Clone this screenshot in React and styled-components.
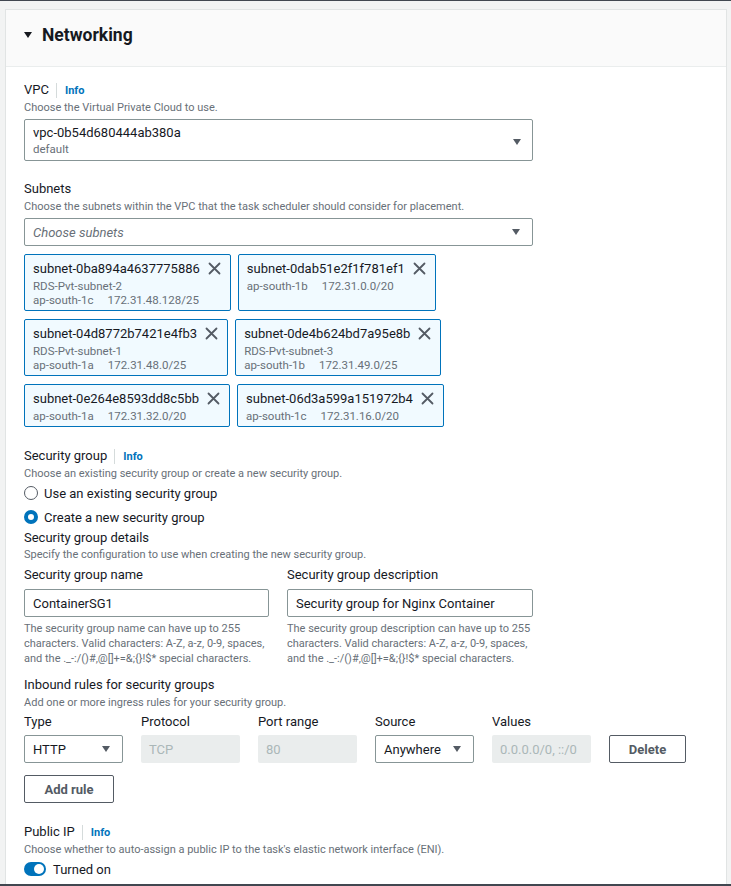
import React from "react";
import styled, { createGlobalStyle } from "styled-components";

const GlobalStyle = createGlobalStyle`
  html, body {
    margin: 0;
    padding: 0;
    background: #f2f3f3;
    font-family: Roboto, "Liberation Sans", Arial, sans-serif;
    color: #16191f;
  }
  * { box-sizing: border-box; }
`;

const TopEdge = styled.div`
  height: 1px;
  background: #414750;
`;

const BottomEdge = styled.div`
  position: fixed;
  left: 0;
  right: 0;
  bottom: 0;
  height: 2px;
  background: #414750;
`;

const Page = styled.div`
  padding: 8px 4px 0 5px;
`;

const Panel = styled.section`
  background: #fff;
  border: 1px solid #e1e4e4;
  border-bottom: none;
`;

const PanelHeader = styled.header`
  display: flex;
  align-items: center;
  gap: 10px;
  height: 57px;
  padding: 0 18px 6px;
  background: #fafafa;
  border-bottom: 1px solid #eaeded;
`;

const HeaderTitle = styled.h2`
  margin: 0;
  font-size: 17.5px;
  font-weight: 700;
  color: #16191f;
`;

const PanelBody = styled.div`
  padding: 15px 18px 40px;
`;

const Block = styled.div`
  margin-top: ${(p) => p.$mt || 0}px;
`;

const LabelRow = styled.div`
  display: flex;
  align-items: center;
  height: 16px;
`;

const Label = styled.span`
  font-size: 13px;
  line-height: 16px;
  color: #16191f;
`;

const InfoLink = styled.a`
  margin-left: 7px;
  padding-left: 8px;
  border-left: 1px solid #d5dbdb;
  font-size: 11px;
  line-height: 15px;
  font-weight: 700;
  color: #0073bb;
  text-decoration: none;
`;

const Desc = styled.div`
  margin-top: ${(p) => (p.$mt === undefined ? 2 : p.$mt)}px;
  font-size: 11px;
  line-height: 15px;
  color: #687078;
`;

const Caret = styled.span`
  display: inline-block;
  width: 0;
  height: 0;
  border-left: 4.5px solid transparent;
  border-right: 4.5px solid transparent;
  border-top: 6px solid ${(p) => p.$color || "#545b64"};
  flex: none;
`;

const SelectBox = styled.div`
  display: flex;
  align-items: ${(p) => (p.$tall ? "flex-start" : "center")};
  justify-content: space-between;
  width: ${(p) => p.$w || 509}px;
  height: ${(p) => (p.$tall ? 42 : 28)}px;
  margin-top: ${(p) => p.$mt || 0}px;
  padding: ${(p) => (p.$tall ? "4px 11px 0 8px" : "0 12px 0 8px")};
  border: 1px solid #879596;
  border-radius: 2px;
  background: #fff;
`;

const SelectText = styled.div`
  display: flex;
  flex-direction: column;
`;

const SelectValue = styled.span`
  font-size: 13px;
  line-height: 17px;
  color: #16191f;
`;

const SelectSub = styled.span`
  font-size: 11.5px;
  line-height: 16px;
  color: #687078;
`;

const Placeholder = styled.span`
  font-size: 13px;
  font-style: italic;
  color: #687078;
`;

const TallCaret = styled.div`
  display: flex;
  align-items: center;
  height: 36px;
`;

const ChipList = styled.div`
  display: flex;
  flex-wrap: wrap;
  gap: 8px 7px;
  width: 509px;
  margin-top: 8px;
`;

const Chip = styled.div`
  display: flex;
  align-items: flex-start;
  padding: 5px 9px 3px 8px;
  border: 1px solid #0073bb;
  border-radius: 2px;
  background: #f1faff;
`;

const ChipText = styled.div`
  display: flex;
  flex-direction: column;
`;

const ChipTitle = styled.span`
  font-size: 13px;
  line-height: 17px;
  color: #16191f;
  margin-bottom: 2px;
`;

const ChipLine = styled.span`
  display: flex;
  gap: 14px;
  font-size: 11.5px;
  line-height: 14px;
  color: #687078;
`;

const Dismiss = styled.button`
  display: flex;
  align-items: center;
  justify-content: center;
  margin-left: 8px;
  margin-top: 2px;
  padding: 0;
  border: none;
  background: none;
  cursor: pointer;
`;

const RadioGroup = styled.div`
  display: flex;
  flex-direction: column;
  gap: 4px;
  margin-top: 2px;
`;

const RadioRow = styled.label`
  display: flex;
  align-items: center;
  gap: 6px;
  height: 20px;
  font-size: 13px;
  color: #16191f;
`;

const RadioDot = styled.span`
  width: 14px;
  height: 14px;
  border-radius: 50%;
  flex: none;
  background: #fff;
  border: ${(p) => (p.$on ? "4px solid #0073bb" : "1.5px solid #545b64")};
`;

const TwoCols = styled.div`
  display: grid;
  grid-template-columns: 245px 246px;
  column-gap: 18px;
  margin-top: 5px;
`;

const Field = styled.div`
  display: flex;
  flex-direction: column;
`;

const TextInput = styled.div`
  display: flex;
  align-items: center;
  height: 28px;
  margin-top: 6px;
  padding: 0 8px;
  border: 1px solid #879596;
  border-radius: 2px;
  font-size: 13px;
  color: #16191f;
  background: #fff;
`;

const Hint = styled.div`
  margin-top: 4px;
  font-size: 11px;
  line-height: 15px;
  color: #687078;
`;

const RuleGrid = styled.div`
  display: grid;
  grid-template-columns: repeat(5, 99px) 77px;
  column-gap: 18px;
  row-gap: 5px;
  margin-top: 4px;
`;

const ColHead = styled.span`
  font-size: 13px;
  line-height: 16px;
  color: #16191f;
`;

const DisabledInput = styled.div`
  display: flex;
  align-items: center;
  height: 28px;
  padding: 0 8px;
  border-radius: 2px;
  background: #eaeded;
  font-size: 13px;
  color: #aab7b8;
`;

const Button = styled.button`
  height: 28px;
  width: ${(p) => p.$w}px;
  margin-top: ${(p) => p.$mt || 0}px;
  padding: 0;
  border: 1px solid #545b64;
  border-radius: 2px;
  background: #fff;
  font-family: inherit;
  font-size: 13px;
  font-weight: 700;
  color: #545b64;
  cursor: pointer;
`;

const ToggleRow = styled.div`
  display: flex;
  align-items: center;
  gap: 7px;
  height: 16px;
  margin-top: 4px;
  font-size: 13px;
  color: #16191f;
`;

const Toggle = styled.span`
  position: relative;
  width: 22px;
  height: 14px;
  border-radius: 7px;
  background: #0073bb;
  flex: none;
`;

const Knob = styled.span`
  position: absolute;
  top: 2px;
  right: 2px;
  width: 10px;
  height: 10px;
  border-radius: 50%;
  background: #fff;
`;

const CloseIcon = () => (
  <svg width="13" height="13" viewBox="0 0 13 13" fill="none">
    <path d="M1.5 1.5l10 10M11.5 1.5l-10 10" stroke="#545b64" strokeWidth="1.8" strokeLinecap="round" />
  </svg>
);

const subnets = [
  { id: "subnet-0ba894a4637775886", name: "RDS-Pvt-subnet-2", az: "ap-south-1c", cidr: "172.31.48.128/25" },
  { id: "subnet-0dab51e2f1f781ef1", az: "ap-south-1b", cidr: "172.31.0.0/20" },
  { id: "subnet-04d8772b7421e4fb3", name: "RDS-Pvt-subnet-1", az: "ap-south-1a", cidr: "172.31.48.0/25" },
  { id: "subnet-0de4b624bd7a95e8b", name: "RDS-Pvt-subnet-3", az: "ap-south-1b", cidr: "172.31.49.0/25" },
  { id: "subnet-0e264e8593dd8c5bb", az: "ap-south-1a", cidr: "172.31.32.0/20" },
  { id: "subnet-06d3a599a151972b4", az: "ap-south-1c", cidr: "172.31.16.0/20" },
];

const nameHint =
  "The security group name can have up to 255 characters. Valid characters: A-Z, a-z, 0-9, spaces, and the ._-:/()#,@[]+=&;{}!$* special characters.";
const descHint =
  "The security group description can have up to 255 characters. Valid characters: A-Z, a-z, 0-9, spaces, and the ._-:/()#,@[]+=&;{}!$* special characters.";

const Labelled = ({ text, info }) => (
  <LabelRow>
    <Label>{text}</Label>
    {info && <InfoLink href="#">Info</InfoLink>}
  </LabelRow>
);

export default function App() {
  return (
    <>
      <GlobalStyle />
      <TopEdge />
      <Page>
        <Panel>
          <PanelHeader>
            <Caret $color="#16191f" />
            <HeaderTitle>Networking</HeaderTitle>
          </PanelHeader>
          <PanelBody>
            <Block>
              <Labelled text="VPC" info />
              <Desc>Choose the Virtual Private Cloud to use.</Desc>
              <SelectBox $tall $mt={4}>
                <SelectText>
                  <SelectValue>vpc-0b54d680444ab380a</SelectValue>
                  <SelectSub>default</SelectSub>
                </SelectText>
                <TallCaret>
                  <Caret />
                </TallCaret>
              </SelectBox>
            </Block>

            <Block $mt={20}>
              <Labelled text="Subnets" />
              <Desc>Choose the subnets within the VPC that the task scheduler should consider for placement.</Desc>
              <SelectBox $mt={4}>
                <Placeholder>Choose subnets</Placeholder>
                <Caret />
              </SelectBox>
              <ChipList>
                {subnets.map((s) => (
                  <Chip key={s.id}>
                    <ChipText>
                      <ChipTitle>{s.id}</ChipTitle>
                      {s.name && <ChipLine>{s.name}</ChipLine>}
                      <ChipLine>
                        <span>{s.az}</span>
                        <span>{s.cidr}</span>
                      </ChipLine>
                    </ChipText>
                    <Dismiss aria-label="Remove">
                      <CloseIcon />
                    </Dismiss>
                  </Chip>
                ))}
              </ChipList>
            </Block>

            <Block $mt={21}>
              <Labelled text="Security group" info />
              <Desc>Choose an existing security group or create a new security group.</Desc>
              <RadioGroup>
                <RadioRow>
                  <RadioDot />
                  Use an existing security group
                </RadioRow>
                <RadioRow>
                  <RadioDot $on />
                  Create a new security group
                </RadioRow>
              </RadioGroup>
            </Block>

            <Block $mt={3}>
              <Labelled text="Security group details" />
              <Desc $mt={1}>Specify the configuration to use when creating the new security group.</Desc>
              <TwoCols>
                <Field>
                  <Labelled text="Security group name" />
                  <TextInput>ContainerSG1</TextInput>
                  <Hint>{nameHint}</Hint>
                </Field>
                <Field>
                  <Labelled text="Security group description" />
                  <TextInput>Security group for Nginx Container</TextInput>
                  <Hint>{descHint}</Hint>
                </Field>
              </TwoCols>
            </Block>

            <Block $mt={11}>
              <Labelled text="Inbound rules for security groups" />
              <Desc>Add one or more ingress rules for your security group.</Desc>
              <RuleGrid>
                <ColHead>Type</ColHead>
                <ColHead>Protocol</ColHead>
                <ColHead>Port range</ColHead>
                <ColHead>Source</ColHead>
                <ColHead>Values</ColHead>
                <span />
                <SelectBox $w={99}>
                  <SelectValue>HTTP</SelectValue>
                  <Caret />
                </SelectBox>
                <DisabledInput>TCP</DisabledInput>
                <DisabledInput>80</DisabledInput>
                <SelectBox $w={99}>
                  <SelectValue>Anywhere</SelectValue>
                  <Caret />
                </SelectBox>
                <DisabledInput>0.0.0.0/0, ::/0</DisabledInput>
                <Button $w={77}>Delete</Button>
              </RuleGrid>
              <Button $w={90} $mt={12}>
                Add rule
              </Button>
            </Block>

            <Block $mt={21}>
              <Labelled text="Public IP" info />
              <Desc>Choose whether to auto-assign a public IP to the task's elastic network interface (ENI).</Desc>
              <ToggleRow>
                <Toggle>
                  <Knob />
                </Toggle>
                Turned on
              </ToggleRow>
            </Block>
          </PanelBody>
        </Panel>
      </Page>
      <BottomEdge />
    </>
  );
}
